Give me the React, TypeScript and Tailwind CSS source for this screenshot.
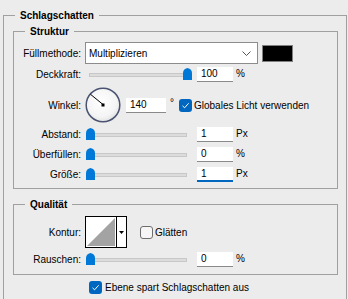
import React from "react";

const Thumb = () => (
  <svg width="9" height="12" viewBox="0 0 9 12" className="block">
    <path d="M0,12 V5 Q0,1 4.5,0 Q9,1 9,5 V12 Z" fill="#0078d7" />
  </svg>
);

function Slider({ value }: { value: number }) {
  return (
    <div className="relative w-[108px] h-[16px] shrink-0">
      <div className="absolute left-[4px] right-[6px] top-[7px] h-[4px] bg-[#dcdcdc] border border-[#c8c8c8]" />
      <div className="absolute top-[2px]" style={{ left: 1 + 97 * value }}>
        <Thumb />
      </div>
    </div>
  );
}

function NumBox({ value, focused, wide }: { value: string; focused?: boolean; wide?: boolean }) {
  return (
    <div
      className={
        "bg-white pl-[4px] leading-[14px] shrink-0 " +
        (wide ? "w-[40px] h-[15px] " : "w-[36px] h-[15px] ") +
        (focused ? "border-b-2 border-[#0067c0]" : "border-b border-[#8a8a8a]")
      }
    >
      {value}
    </div>
  );
}

function Label({ children }: { children: React.ReactNode }) {
  return <div className="w-[67px] shrink-0 text-right whitespace-nowrap">{children}</div>;
}

function Check({ checked }: { checked: boolean }) {
  return checked ? (
    <div className="w-[13px] h-[13px] rounded-[3px] bg-[#0067c0] flex items-center justify-center shrink-0">
      <svg width="9" height="9" viewBox="0 0 9 9">
        <path d="M1.5,4.8 L3.6,6.8 L7.6,2.3" fill="none" stroke="#fff" strokeWidth="1" />
      </svg>
    </div>
  ) : (
    <div className="w-[13px] h-[13px] rounded-[3px] bg-[#f6f6f6] border border-[#6e6e6e] shrink-0" />
  );
}

function SliderRow({ label, value, text, unit, focused, className }: { label: string; value: number; text: string; unit: string; focused?: boolean; className?: string }) {
  return (
    <div className={"flex items-center h-[16px] " + (className ?? "")}>
      <Label>{label}</Label>
      <div className="ml-[4px]">
        <Slider value={value} />
      </div>
      <div className="ml-[4px]">
        <NumBox value={text} focused={focused} />
      </div>
      <div className="ml-[3px] mb-[2px]">{unit}</div>
    </div>
  );
}

function Dial() {
  return (
    <svg width="36" height="36" viewBox="0 0 36 36" className="block shrink-0">
      <defs>
        <radialGradient id="dg" cx="0.45" cy="0.4" r="0.65">
          <stop offset="0" stopColor="#ffffff" />
          <stop offset="0.7" stopColor="#f4f4f4" />
          <stop offset="1" stopColor="#dcdcdc" />
        </radialGradient>
      </defs>
      <circle cx="18" cy="18" r="16.8" fill="url(#dg)" stroke="#4a5472" strokeWidth="1.5" />
      <line x1="5.5" y1="7.3" x2="18" y2="17.5" stroke="#000" strokeWidth="1" />
      <rect x="16.5" y="16.5" width="3" height="3" fill="#000" />
    </svg>
  );
}

function Contour() {
  return (
    <div className="flex h-[32px] w-[42px] border border-black bg-white shrink-0">
      <svg width="30" height="30" viewBox="0 0 30 30" className="block">
        <rect x="0" y="0" width="30" height="30" fill="#fff" />
        <polygon points="1,29 29,1 29,29" fill="#a3a3a3" />
      </svg>
      <div className="w-[1px] h-full bg-black" />
      <div className="flex-1 flex items-center justify-center">
        <svg width="5" height="3" viewBox="0 0 5 3">
          <polygon points="0,0 5,0 2.5,3" fill="#000" />
        </svg>
      </div>
    </div>
  );
}

export default function App() {
  return (
    <div className="w-[348px] h-[299px] overflow-hidden bg-[#ececec] text-[10px] text-black font-['Liberation_Sans',Arial,sans-serif]">
      <fieldset className="ml-[3px] mt-[7px] w-[344px] h-[300px] border border-[#a0a0a0]">
        <legend className="ml-[11px] px-[5px] h-[17px] leading-[17px] font-bold">Schlagschatten</legend>

        <fieldset className="ml-[9px] w-[325px] border border-[#a0a0a0] pt-[3px] pb-[6px]">
          <legend className="ml-[11px] px-[5px] h-[15px] leading-[15px] font-bold">Struktur</legend>

          <div className="flex items-center h-[22px]">
            <Label>Füllmethode:</Label>
            <div className="ml-[4px] w-[173px] h-[22px] bg-white border border-[#8c8c8c] flex items-center pl-[3px] pr-[6px]">
              <span className="flex-1">Multiplizieren</span>
              <svg width="9" height="5" viewBox="0 0 9 5">
                <polyline points="0.5,0.5 4.5,4.5 8.5,0.5" fill="none" stroke="#555" strokeWidth="1" />
              </svg>
            </div>
            <div className="ml-[4px] w-[31px] h-[17px] bg-black border border-[#808080]" />
          </div>

          <SliderRow label="Deckkraft:" value={1} text="100" unit="%" className="mt-[2px]" />

          <div className="flex items-center h-[38px] mt-[4px]">
            <Label>Winkel:</Label>
            <div className="ml-[4px]">
              <Dial />
            </div>
            <div className="ml-[5px]">
              <NumBox value="140" wide />
            </div>
            <div className="w-[13px] pl-[4px] mb-[6px]">°</div>
            <Check checked />
            <span className="ml-[2px]">Globales Licht verwenden</span>
          </div>

          <SliderRow label="Abstand:" value={0} text="1" unit="Px" className="mt-[2px]" />
          <SliderRow label="Überfüllen:" value={0} text="0" unit="%" className="mt-[4px]" />
          <SliderRow label="Größe:" value={0} text="1" unit="Px" focused className="mt-[4px]" />
        </fieldset>

        <fieldset className="ml-[9px] mt-[8px] w-[325px] border border-[#a0a0a0] pt-[4px] pb-[7px]">
          <legend className="ml-[11px] px-[5px] h-[15px] leading-[15px] font-bold">Qualität</legend>
          <div className="flex items-center h-[32px]">
            <Label>Kontur:</Label>
            <div className="ml-[4px]">
              <Contour />
            </div>
            <div className="ml-[13px]">
              <Check checked={false} />
            </div>
            <span className="ml-[2px]">Glätten</span>
          </div>
          <SliderRow label="Rauschen:" value={0} text="0" unit="%" className="mt-[3px]" />
        </fieldset>

        <div className="ml-[85px] mt-[6px] flex items-center h-[13px]">
          <Check checked />
          <span className="ml-[3px]">Ebene spart Schlagschatten aus</span>
        </div>
      </fieldset>
    </div>
  );
}
